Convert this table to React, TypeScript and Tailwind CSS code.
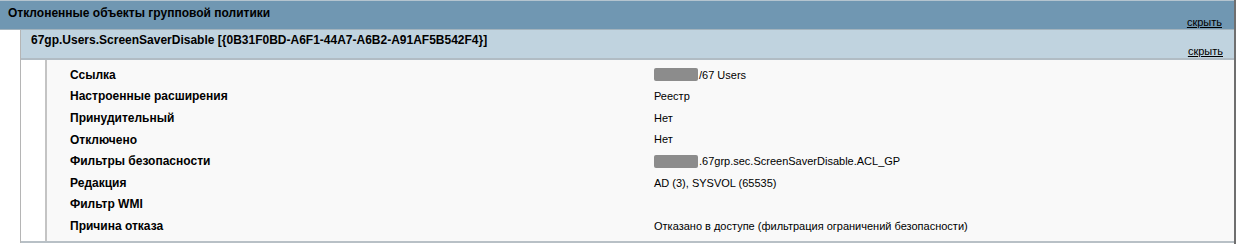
const ROWS: { label: string; value: string; masked?: boolean }[] = [
  { label: "Ссылка", value: "/67 Users", masked: true },
  { label: "Настроенные расширения", value: "Реестр" },
  { label: "Принудительный", value: "Нет" },
  { label: "Отключено", value: "Нет" },
  { label: "Фильтры безопасности", value: ".67grp.sec.ScreenSaverDisable.ACL_GP", masked: true },
  { label: "Редакция", value: "AD (3), SYSVOL (65535)" },
  { label: "Фильтр WMI", value: "" },
  { label: "Причина отказа", value: "Отказано в доступе (фильтрация ограничений безопасности)" },
];

function HideLink() {
  return (
    <a href="#" className="self-end text-[11px] leading-[13px] text-black underline underline-offset-1">
      скрыть
    </a>
  );
}

export default function App() {
  return (
    <div className="h-[244px] w-[1236px] border-r-2 border-[#6f6f6f] bg-white font-['Liberation_Sans',Arial,sans-serif] text-black">
      <div className="flex h-[30px] justify-between border-t border-b border-t-[#b4c4cf] border-b-[#a3b3bd] bg-[#7097b2] pl-[8px] pr-[12px]">
        <div className="pt-[5px] text-[12px] font-bold leading-[15px]">Отклоненные объекты групповой политики</div>
        <HideLink />
      </div>

      <div className="ml-[20px] border-l border-[#b5b5b5]">
        <div className="flex h-[30px] justify-between border-b-2 border-[#b1bcc4] bg-[#c0d3df] pl-[10px] pr-[11px]">
          <div className="pt-[3px] text-[12px] font-bold leading-[15px]">
            67gp.Users.ScreenSaverDisable [{"{"}0B31F0BD-A6F1-44A7-A6B2-A91AF5B542F4{"}"}]
          </div>
          <HideLink />
        </div>

        <div className="flex border-b-2 border-[#b8c0c6]">
          <div className="w-[24px] shrink-0 bg-white" />
          <div className="flex-1 border-l-2 border-[#c4c4c4] bg-[#f9f9f9] pt-[4px] pb-[4px]">
            {ROWS.map((r) => (
              <div key={r.label} className="flex h-[21.6px] items-center">
                <div className="w-[607px] shrink-0 pl-[23px] text-[12px] font-bold">{r.label}</div>
                <div className="flex items-center text-[11px]">
                  {r.masked && <span className="mr-[1px] inline-block h-[13px] w-[44px] rounded-[2px] bg-[#8c8c8c]" />}
                  {r.value}
                </div>
              </div>
            ))}
          </div>
        </div>
      </div>
    </div>
  );
}
